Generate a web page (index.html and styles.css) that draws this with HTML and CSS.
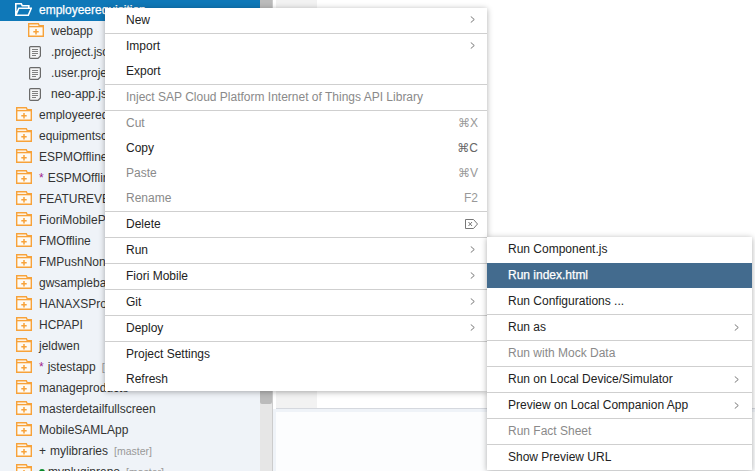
FILE: index.html
```html
<!DOCTYPE html>
<html lang="en">
<head>
  <meta charset="UTF-8">
  <meta name="viewport" content="width=device-width, initial-scale=1.0">
  <title>Project context menu</title>
  <link rel="stylesheet" href="styles.css">
</head>
<body>
  <svg class="defs" width="0" height="0">
    <symbol id="folder" viewBox="0 0 16 14">
      <path d="M.7 13.300V.7h9.600l1 2h4v10.600z" fill="#fefaf3" stroke="#f7a23a" stroke-width="1.4"/>
      <path d="M.7 3.600h14.600" fill="none" stroke="#f7a23a" stroke-width="1.4"/>
      <path d="M8 6v5.400M5.300 8.700h5.400" fill="none" stroke="#f7a23a" stroke-width="1.500"/>
    </symbol>
    <symbol id="file" viewBox="0 0 12 13">
      <path d="M.6 1.600a1 1 0 0 1 1-1h8.800a1 1 0 0 1 1 1v8.400l-2.400 2.400h-7.400a1 1 0 0 1-1-1z" fill="#f4f5f6" stroke="#6a6a6a" stroke-width="1.200"/>
      <path d="M3 3.500h6M3 5.500h6M3 7.500h6M3 9.500h4" fill="none" stroke="#808080"/>
    </symbol>
    <symbol id="chevron" viewBox="0 0 5 8">
      <path d="M.5.500 4.500 4 .5 7.500" fill="none" stroke="#666"/>
    </symbol>
  </svg>

  <div class="app">
    <div class="tree">
      <div class="row row-open">
        <svg class="open-icon" viewBox="0 0 17 13" width="17" height="13"><path d="M.8 12.200V.8h5.500l1 2h6.500v2.400M.8 12.200l3-7h12.500l-3 7z" fill="none" stroke="#fff" stroke-width="1.600"/></svg>
        <span class="name name-open">employeerequisition</span>
      </div>
      <div class="row child"><svg class="icon"><use href="#folder"/></svg><span class="name">webapp</span></div>
      <div class="row child"><svg class="file"><use href="#file"/></svg><span class="name">.project.json</span></div>
      <div class="row child"><svg class="file"><use href="#file"/></svg><span class="name">.user.project.json</span></div>
      <div class="row child"><svg class="file"><use href="#file"/></svg><span class="name">neo-app.json</span></div>
      <div class="row"><svg class="icon"><use href="#folder"/></svg><span class="name">employeerequisition2</span></div>
      <div class="row"><svg class="icon"><use href="#folder"/></svg><span class="name">equipmentscan</span></div>
      <div class="row"><svg class="icon"><use href="#folder"/></svg><span class="name">ESPMOffline</span></div>
      <div class="row"><svg class="icon"><use href="#folder"/></svg><span class="star">*</span><span class="name">ESPMOffline2</span></div>
      <div class="row"><svg class="icon"><use href="#folder"/></svg><span class="name">FEATUREVERSION</span></div>
      <div class="row"><svg class="icon"><use href="#folder"/></svg><span class="name">FioriMobileProject</span></div>
      <div class="row"><svg class="icon"><use href="#folder"/></svg><span class="name">FMOffline</span></div>
      <div class="row"><svg class="icon"><use href="#folder"/></svg><span class="name">FMPushNonAdmin</span></div>
      <div class="row"><svg class="icon"><use href="#folder"/></svg><span class="name">gwsamplebasic</span></div>
      <div class="row"><svg class="icon"><use href="#folder"/></svg><span class="name">HANAXSProject</span></div>
      <div class="row"><svg class="icon"><use href="#folder"/></svg><span class="name">HCPAPI</span></div>
      <div class="row"><svg class="icon"><use href="#folder"/></svg><span class="name">jeldwen</span></div>
      <div class="row"><svg class="icon"><use href="#folder"/></svg><span class="star">*</span><span class="name">jstestapp</span><span class="branch">[master]</span></div>
      <div class="row"><svg class="icon"><use href="#folder"/></svg><span class="name">manageproducts</span></div>
      <div class="row"><svg class="icon"><use href="#folder"/></svg><span class="name">masterdetailfullscreen</span></div>
      <div class="row"><svg class="icon"><use href="#folder"/></svg><span class="name">MobileSAMLApp</span></div>
      <div class="row"><svg class="icon"><use href="#folder"/></svg><span class="plus">+</span><span class="name">mylibraries</span><span class="branch">[master]</span></div>
      <div class="row"><svg class="icon"><use href="#folder"/></svg><span class="dot"></span><span class="name">mypluginrepo</span><span class="branch">[master]</span></div>
    </div>

    <div class="scrollbar"><div class="thumb"></div></div>

    <div class="content">
      <div class="editor"><div class="editor-inner"><div class="tab-strip"></div></div></div>
      <div class="console"></div>
    </div>
  </div>

  <ul class="menu main-menu">
    <li class="item has-sub">New<svg class="chevron"><use href="#chevron"/></svg></li>
    <li class="item sep has-sub">Import<svg class="chevron"><use href="#chevron"/></svg></li>
    <li class="item">Export</li>
    <li class="item sep off">Inject SAP Cloud Platform Internet of Things API Library</li>
    <li class="item sep off">Cut<span class="key">⌘X</span></li>
    <li class="item">Copy<span class="key">⌘C</span></li>
    <li class="item off">Paste<span class="key">⌘V</span></li>
    <li class="item off">Rename<span class="key">F2</span></li>
    <li class="item sep">Delete
      <svg class="del" viewBox="0 0 13 10" width="13" height="10"><path d="M.5.500h8l4 4.500-4 4.500h-8z M3.500 3l3.500 4M7 3 3.500 7" fill="none" stroke="#777"/></svg>
    </li>
    <li class="item sep has-sub">Run<svg class="chevron"><use href="#chevron"/></svg></li>
    <li class="item sep has-sub">Fiori Mobile<svg class="chevron"><use href="#chevron"/></svg></li>
    <li class="item sep has-sub">Git<svg class="chevron"><use href="#chevron"/></svg></li>
    <li class="item sep has-sub">Deploy<svg class="chevron"><use href="#chevron"/></svg></li>
    <li class="item sep">Project Settings</li>
    <li class="item last">Refresh</li>
  </ul>

  <ul class="menu sub-menu">
    <li class="item first">Run Component.js</li>
    <li class="item selected">Run index.html</li>
    <li class="item">Run Configurations ...</li>
    <li class="item sep has-sub">Run as<svg class="chevron"><use href="#chevron"/></svg></li>
    <li class="item sep off">Run with Mock Data</li>
    <li class="item sep has-sub">Run on Local Device/Simulator<svg class="chevron"><use href="#chevron"/></svg></li>
    <li class="item sep has-sub">Preview on Local Companion App<svg class="chevron"><use href="#chevron"/></svg></li>
    <li class="item sep off">Run Fact Sheet</li>
    <li class="item sep">Show Preview URL</li>
  </ul>
</body>
</html>
```

FILE: styles.css
```css
html, body { margin: 0; height: 100%; overflow: hidden; }
body { font-family: "Liberation Sans", "DejaVu Sans", sans-serif; font-size: 12px; color: #333; background: #fff; }
.defs { position: absolute; }

.app { display: flex; height: 471px; overflow: hidden; }

.tree { width: 260px; flex: none; background: #eff3f8; overflow: hidden; }
.row { display: flex; align-items: center; height: 21px; box-sizing: border-box; padding: 0 0 2px 16px; white-space: nowrap; }
.row.child { padding-left: 28px; }
.row-open { background: #0f78b8; padding-left: 15px; }
.icon { width: 16px; height: 14px; flex: none; margin: -2px 7px 0 0; }
.file { width: 12px; height: 13px; flex: none; margin: 1px 10px 0 1px; }
.open-icon { flex: none; margin: 0 7px 0 0; }
.name-open { color: #fff; -webkit-text-stroke: 0.25px #fff; }
.star { color: #a0248c; margin-right: 4px; }
.plus { margin-right: 4px; }
.dot { width: 6px; height: 6px; border-radius: 50%; background: #0a8a2a; margin-right: 3px; }
.branch { color: #999; font-size: 10.5px; margin-left: 6px; }

.scrollbar { width: 12px; flex: none; background: #e6e6e6; border-right: 1px solid #ccc; }
.thumb { height: 404px; background: #bbb; border-radius: 0 0 2px 2px; }

.content { flex: 1; display: flex; flex-direction: column; background: #eff3f8; }
.editor { height: 409px; flex: none; background: #fff; padding-left: 3px; }
.editor-inner { height: 408px; border-bottom: 1px solid #d5d8de; }
.tab-strip { width: 41px; height: 100%; background: #f2f2f2; }
.console { flex: 1; margin: 3px 0 0 3px; background: #fcfdfe; }

.menu { position: absolute; margin: 0; padding: 0; list-style: none; background: #fff; color: #222; box-shadow: 0 1px 6px rgba(0, 0, 0, 0.32); }
.main-menu { left: 105px; top: 8px; width: 382px; }
.sub-menu { left: 487px; top: 237px; width: 265px; }
.item { display: flex; align-items: center; justify-content: space-between; height: 25px; box-sizing: border-box; padding: 0 9px 2px 21px; white-space: nowrap; }
.item.sep { height: 26px; border-top: 1px solid #cfcfcf; }
.item.last { height: 24px; padding-bottom: 1px; }
.item.off { color: #8a8a8a; }
.sub-menu .item { height: 26px; padding: 0 10px 1px 21px; }
.sub-menu .item.first { padding-bottom: 2px; }
.sub-menu .item.selected { height: 25px; background: #436b8e; color: #fff; -webkit-text-stroke: 0.25px #fff; }
.chevron { width: 5px; height: 7px; flex: none; margin-right: 3px; }
.key { color: #666; letter-spacing: 0; }
.off .key { color: #999; }
.del { flex: none; }
```
